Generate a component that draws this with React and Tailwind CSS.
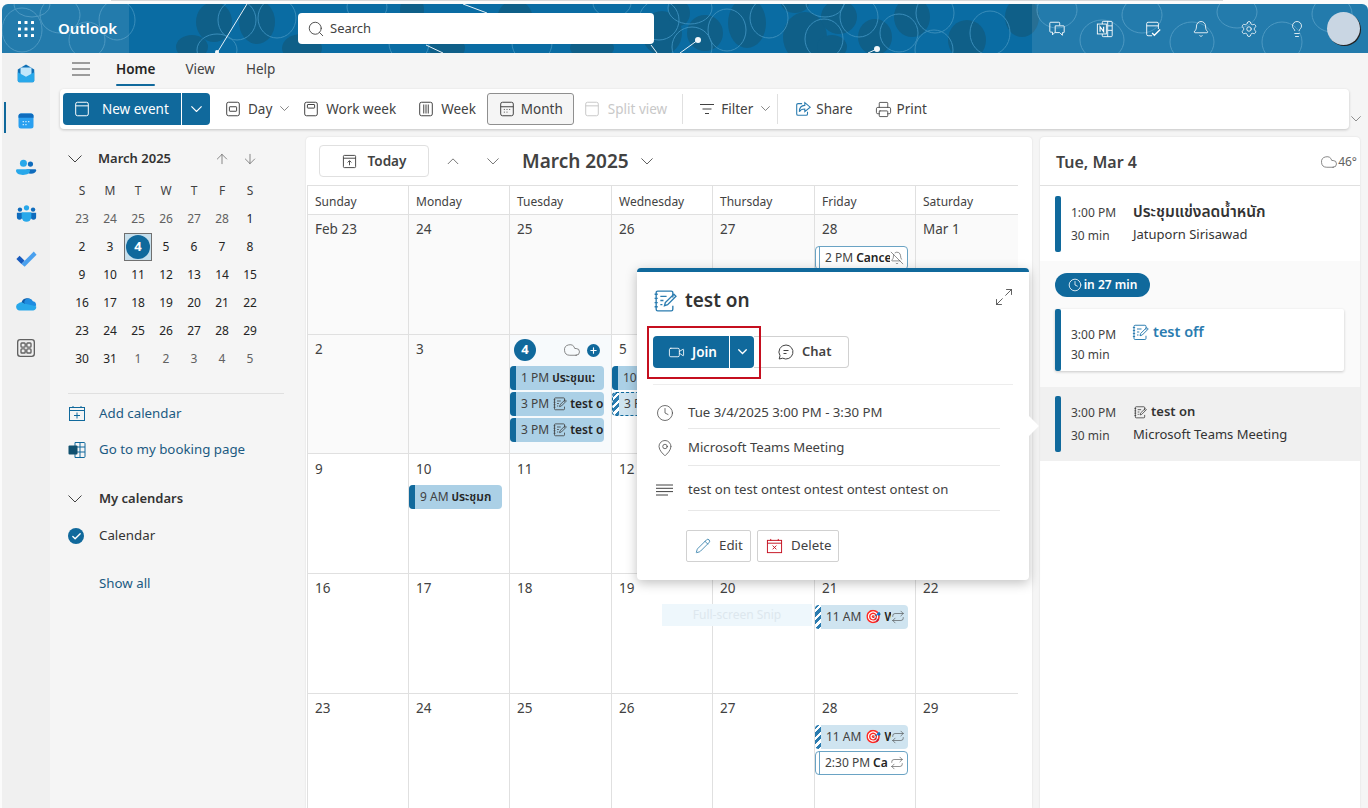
import React from "react";
import {
  Search, Settings, Bell, BellOff, Lightbulb, ArrowUp, ArrowDown,
  Printer, Clock, MapPin, Pencil, Video, Check, Plus, Cloud, Maximize2, Repeat,
} from "lucide-react";

// dark blobs and thin rings of the header theme, measured off the picture
const darkBlobs = [
  [212, 22, 18, 20], [255, 22, 18, 22], [190, 47, 16, 12], [300, 48, 20, 14], [410, 10, 12, 15], [445, 48, 18, 12],
  [513, 20, 18, 20], [590, 48, 22, 12], [660, 33, 20, 22], [677, 13, 11, 13], [703, 33, 18, 18], [745, 23, 19, 25],
  [793, 3, 14, 10], [803, 37, 22, 25], [837, 17, 18, 17], [830, 47, 15, 12], [873, 37, 17, 18], [910, 17, 18, 20],
  [965, 40, 19, 20], [1020, 17, 17, 20],
];
const rings = [
  [235, 20, 19, 20], [275, 18, 19, 20], [215, 50, 20, 16], [365, 7, 20, 15], [407, 43, 20, 20], [530, 43, 20, 20],
  [610, 3, 19, 14], [657, 20, 20, 20], [688, 8, 22, 16], [725, 30, 19, 21], [767, 18, 19, 20], [690, 47, 20, 20],
  [822, 39, 19, 20], [857, 17, 19, 20], [823, 3, 19, 14], [897, 33, 19, 19], [933, 13, 19, 20], [988, 33, 20, 22],
  [932, 50, 19, 20], [1055, 10, 20, 18], [1100, 40, 22, 20], [1140, 15, 20, 18], [1190, 42, 22, 20], [1235, 12, 20, 16],
  [1280, 42, 20, 20], [1330, 14, 20, 18], [20, 30, 20, 22], [58, 15, 20, 18], [85, 40, 18, 18], [30, 5, 18, 12],
  [115, 20, 18, 20],
];

const SkyPattern = () => (
  <svg className="absolute inset-0 h-full w-full" viewBox="0 4 1366 49" preserveAspectRatio="none">
    {darkBlobs.map((b, i) => (
      <ellipse key={i} cx={b[0]} cy={b[1]} rx={b[2]} ry={b[3]} fill="#0f5f88" />
    ))}
    {rings.map((b, i) => (
      <ellipse key={i} cx={b[0]} cy={b[1]} rx={b[2]} ry={b[3]} fill="none" stroke="#3a8dba" strokeWidth="1" />
    ))}
    {[
      [245, 4, 215, 53], [461, 4, 485, 13], [424, 45, 441, 53], [649, 45, 655, 53], [696, 40, 678, 53], [875, 49, 866, 53],
    ].map((l, i) => (
      <line key={i} x1={l[0]} y1={l[1]} x2={l[2]} y2={l[3]} stroke="#e8f2f8" strokeWidth="1" />
    ))}
    <circle cx="215" cy="52" r="2" fill="#f2f7fa" />
    <circle cx="696" cy="40" r="3" fill="#f2f7fa" />
    <circle cx="875" cy="49" r="3" fill="#f2f7fa" />
  </svg>
);

const Chev = ({ className = "", up, w = 14, color = "currentColor" }) => (
  <svg viewBox="0 0 14 8" width={w} height={(w * 8) / 14} className={`shrink-0 ${className}`} fill="none" stroke={color} strokeWidth="1">
    <path d={up ? "M.5 7.500 7 1l6.500 6.500" : "M.5.5 7 7 13.500.5"} />
  </svg>
);

const NoteIcon = ({ className, color = "currentColor" }) => (
  <svg viewBox="0 0 24 24" className={className} fill="none" stroke={color} strokeWidth="1.3">
    <path d="M20 9V4.500a1.500 1.500 0 0 0-1.500-1.500h-13A1.500 1.500 0 0 0 4 4.500v16A1.500 1.500 0 0 0 5.500 22h13a1.500 1.500 0 0 0 1.500-1.500V17" />
    <path d="M2.500 6h3M2.500 10h3M2.500 14h3M2.500 18h3M8 8h6M8 12h3M8 16h2" />
    <path d="M12 17l.8-3L21 6l2 2-8 8z" />
  </svg>
);

const RailIcons = {
  mail: (
    <svg viewBox="0 0 24 24" className="h-[22px] w-[22px]">
      <path d="M12 1.500 21 7v12a2 2 0 0 1-2 2H5a2 2 0 0 1-2-2V7z" fill="#0f6fb5" />
      <path d="M6 5h12v8l-6 3-6-3z" fill="#bfe6fb" />
      <path d="M3 10l9 5 9-5v9a2 2 0 0 1-2 2H5a2 2 0 0 1-2-2z" fill="#28a8ea" />
    </svg>
  ),
  calendar: (
    <svg viewBox="0 0 24 24" className="h-[20px] w-[20px]">
      <rect x="3" y="3" width="18" height="18" rx="3" fill="#2aa0f0" />
      <path d="M3 8V6a3 3 0 0 1 3-3h12a3 3 0 0 1 3 3v2z" fill="#0f6cbd" />
      <path d="M8 12h1.500v1.500H8zM11.200 12h1.500v1.500h-1.500zM14.500 12H16v1.500h-1.500zM8 15.500h1.500V17H8zM11.200 15.500h1.500V17h-1.500z" fill="#d6effd" />
    </svg>
  ),
  people: (
    <svg viewBox="0 0 24 24" className="h-[21px] w-[21px]">
      <circle cx="16.500" cy="8" r="3" fill="#0f6cbd" />
      <path d="M12 14h10a1 1 0 0 1 1 1c0 2.500-2.500 4-6 4s-5-1.500-5-4z" fill="#0f6cbd" />
      <circle cx="8.500" cy="7" r="4" fill="#28a8ea" />
      <path d="M1.500 14h13a1.500 1.500 0 0 1 1.500 1.500c0 3-3 5-8 5s-8-2-8-5A1.500 1.500 0 0 1 1.500 14z" fill="#28a8ea" />
    </svg>
  ),
  group: (
    <svg viewBox="0 0 24 24" className="h-[21px] w-[21px]">
      <circle cx="4.500" cy="7.500" r="2.500" fill="#0f6cbd" />
      <circle cx="19.500" cy="7.500" r="2.500" fill="#0f6cbd" />
      <circle cx="12" cy="5.500" r="3" fill="#28a8ea" />
      <path d="M1 11h6v5a3 3 0 0 1-6 0zM17 11h6v5a3 3 0 0 1-6 0z" fill="#0f6cbd" />
      <path d="M6.500 10.500h11V16a5.500 5.500 0 0 1-11 0z" fill="#28a8ea" />
    </svg>
  ),
  todo: (
    <svg viewBox="0 0 24 24" className="h-[22px] w-[22px]">
      <path d="M1.500 13 5 9.500l5.500 5.500L7 18.500z" fill="#185abd" />
      <path d="M7 18.500 20.500 5l3 3.500-13 13-3.500-3z" fill="#4aa0ee" />
    </svg>
  ),
  cloud: (
    <svg viewBox="0 0 24 24" className="h-[22px] w-[22px]">
      <path d="M7 10.500a6.500 6.500 0 0 1 12-1.500l-8 6-6-2z" fill="#0f5ba7" />
      <path d="M10 10a5 5 0 0 1 9.500-1 4.500 4.500 0 0 1 3.500 5l-9 2z" fill="#1f8ce0" />
      <path d="M5 19a4 4 0 0 1-1-7.800 4 4 0 0 1 6 .3l13 3a3.500 3.500 0 0 1-3 4.500z" fill="#28a8ea" />
    </svg>
  ),
  apps: (
    <svg viewBox="0 0 24 24" className="h-[20px] w-[20px]" fill="none" stroke="#616161" strokeWidth="1.600">
      <rect x="2" y="2" width="20" height="20" rx="3" />
      <rect x="6" y="6" width="5" height="5" rx="1" />
      <rect x="13" y="6" width="5" height="5" rx="1" />
      <rect x="6" y="13" width="5" height="5" rx="1" />
      <rect x="13" y="13" width="5" height="5" rx="1" />
    </svg>
  ),
};

const Rail = () => (
  <div className="flex w-[48px] shrink-0 flex-col items-center bg-[#f0f0f0] pt-[9px]">
    <div className="flex h-[24px] items-center justify-center">{RailIcons.mail}</div>
    <div className="relative mt-[23px] flex h-[24px] w-full items-center justify-center">
      <span className="absolute left-[2px] top-[-7px] h-[31px] w-[2px] bg-[#10699c]" />
      {RailIcons.calendar}
    </div>
    <div className="mt-[22px] flex h-[24px] items-center">{RailIcons.people}</div>
    <div className="mt-[22px] flex h-[24px] items-center">{RailIcons.group}</div>
    <div className="mt-[21px] flex h-[24px] items-center">{RailIcons.todo}</div>
    <div className="mt-[22px] flex h-[24px] items-center">{RailIcons.cloud}</div>
    <div className="mt-[20px] flex h-[24px] items-center">{RailIcons.apps}</div>
  </div>
);

const SmallCal = ({ type }) => {
  const inner = {
    day: <rect x="6" y="7.500" width="8" height="5" rx="0.500" />,
    work: <rect x="6" y="5" width="8" height="4" rx="0.500" />,
    week: <path d="M7.500 5v10M10 5v10M12.500 5v10" />,
    month: <path d="M3 7.500h14M6.500 10.500h1M9.500 10.500h1M12.500 10.500h1M6.500 13.500h1M9.500 13.500h1" />,
    plain: <path d="M3 6.500h14" />,
  }[type];
  return (
    <svg viewBox="0 0 20 20" className="h-[18px] w-[18px] shrink-0" fill="none" stroke="currentColor" strokeWidth="1.100">
      <rect x="3" y="2.500" width="14" height="15" rx="2" />
      {inner}
    </svg>
  );
};

const Toolbar = () => (
  <div className="flex items-center">
    <div className="ml-[10px] flex h-[40px] w-[1289px] items-center rounded-[4px] bg-white pl-[3px] text-[13.500px] text-[#424242] shadow-[0_1px_3px_rgba(0,0,0,0.2)]">
      <div className="flex h-[32px] w-[147px] items-center rounded-[4px] bg-[#10699c] text-white">
        <div className="flex w-[118px] items-center pl-[10px]">
          <SmallCal type="plain" />
          <span className="ml-[11px]">New event</span>
        </div>
        <div className="flex h-full flex-1 items-center justify-center border-l border-white">
          <Chev w={11} className="[stroke-width:1.500]" />
        </div>
      </div>
      <div className="ml-[14px] flex items-center">
        <SmallCal type="day" />
        <span className="ml-[6px]">Day</span>
        <Chev w={9} className="ml-[8px]" />
      </div>
      <div className="ml-[13px] flex items-center">
        <SmallCal type="work" />
        <span className="ml-[6px]">Work week</span>
      </div>
      <div className="ml-[21px] flex items-center">
        <SmallCal type="week" />
        <span className="ml-[6px]">Week</span>
      </div>
      <div className="ml-[11px] flex h-[32px] w-[87px] items-center rounded-[3px] border border-[#8f8f8f] bg-[#f5f5f5] pl-[10px]">
        <SmallCal type="month" />
        <span className="ml-[5px]">Month</span>
      </div>
      <div className="ml-[9px] flex items-center text-[#c8c8c8]">
        <SmallCal type="plain" />
        <span className="ml-[7px]">Split view</span>
      </div>
      <span className="ml-[15px] h-[30px] w-px bg-[#e0e0e0]" />
      <div className="ml-[16px] flex items-center">
        <svg viewBox="0 0 16 16" className="h-[16px] w-[16px]" fill="none" stroke="currentColor">
          <path d="M1 3.500h14M3.500 8h9M6 12.500h4" />
        </svg>
        <span className="ml-[6px]">Filter</span>
        <Chev w={9} className="ml-[8px]" />
      </div>
      <span className="ml-[7px] h-[30px] w-px bg-[#e0e0e0]" />
      <div className="ml-[16px] flex items-center">
        <svg viewBox="0 0 20 20" className="h-[18px] w-[18px]" fill="none" stroke="#2b7cb0" strokeWidth="1.200">
          <path d="M9 4H4.500A1.500 1.500 0 0 0 3 5.500v10A1.500 1.500 0 0 0 4.500 17h9a1.500 1.500 0 0 0 1.500-1.500V13" />
          <path d="M12 3l6 5-6 5v-3c-3 0-5 1-6 3 0-4 2-7 6-7z" />
        </svg>
        <span className="ml-[4px]">Share</span>
      </div>
      <div className="ml-[22px] flex items-center">
        <Printer size={17} strokeWidth={1.200} />
        <span className="ml-[5px]">Print</span>
      </div>
    </div>
    <Chev w={10} className="ml-[2px] mt-[20px] text-[#616161]" />
  </div>
);

const weeks = [
  ["23", "24", "25", "26", "27", "28", "1"],
  ["2", "3", "4", "5", "6", "7", "8"],
  ["9", "10", "11", "12", "13", "14", "15"],
  ["16", "17", "18", "19", "20", "21", "22"],
  ["23", "24", "25", "26", "27", "28", "29"],
  ["30", "31", "1", "2", "3", "4", "5"],
];

const Sidebar = () => (
  <div className="w-[256px] shrink-0 pl-[18px] pt-[9px] text-[13.300px] text-[#242424]">
    <div className="flex h-[24px] items-center pt-[2px]">
      <Chev color="#424242" />
      <span className="ml-[16px] text-[13px] font-semibold text-[#333]">March 2025</span>
      <ArrowUp size={16} strokeWidth={1.100} className="ml-[43px] text-[#616161]" />
      <ArrowDown size={16} strokeWidth={1.100} className="ml-[12px] text-[#616161]" />
    </div>
    <div className="mt-[7px] grid w-[196px] grid-cols-7 text-center">
      {["S", "M", "T", "W", "T", "F", "S"].map((d, i) => (
        <span key={i} className="flex h-[28px] items-center justify-center text-[12px] text-[#424242]">{d}</span>
      ))}
      {weeks.map((w, wi) =>
        w.map((d, i) => {
          const muted = (wi === 0 && i < 6) || (wi === 5 && i > 1);
          if (wi === 1 && i === 2) {
            return (
              <span key={d} className="flex h-[28px] items-center justify-center border border-[#707070] bg-[#c7dfec]">
                <span className="flex h-[24px] w-[24px] items-center justify-center rounded-full bg-[#10699c] text-[13px] font-bold text-white">4</span>
              </span>
            );
          }
          return (
            <span key={wi + "-" + i} className={`flex h-[28px] items-center justify-center text-[12px] ${muted ? "text-[#616161]" : "text-[#242424]"}`}>
              {d}
            </span>
          );
        })
      )}
    </div>
    <div className="mt-[20px] h-px w-[216px] bg-[#e0e0e0]" />
    <div className="mt-[10px] flex h-[20px] items-center text-[#1b5a82]">
      <svg viewBox="0 0 18 18" className="h-[18px] w-[18px]" fill="none" stroke="#10699c">
        <rect x="1.500" y="2.500" width="15" height="13" />
        <path d="M1.500 5.500h15M5 1v2M13 1v2M9 7.500v6M6 10.500h6" />
      </svg>
      <span className="ml-[13px]">Add calendar</span>
    </div>
    <div className="mt-[16px] flex h-[20px] items-center text-[#1b5a82]">
      <svg viewBox="0 0 18 18" className="h-[18px] w-[18px]">
        <path d="M7 1.500h9a1 1 0 0 1 1 1v13a1 1 0 0 1-1 1H7z" fill="none" stroke="#10699c" />
        <path d="M8 6h9M8 11h9M12 2v14" stroke="#10699c" />
        <rect x="0.500" y="4.500" width="9" height="9" rx="1" fill="#10506f" />
      </svg>
      <span className="ml-[13px]">Go to my booking page</span>
    </div>
    <div className="mt-[29px] flex h-[20px] items-center font-semibold text-[#333]">
      <Chev color="#424242" />
      <span className="ml-[17px] text-[13px]">My calendars</span>
    </div>
    <div className="mt-[17px] flex h-[20px] items-center text-[#333]">
      <span className="flex h-[16px] w-[16px] items-center justify-center rounded-full bg-[#10699c] text-white">
        <Check size={11} strokeWidth={3} />
      </span>
      <span className="ml-[15px]">Calendar</span>
    </div>
    <div className="ml-[31px] mt-[28px] text-[#1b5a82]">Show all</div>
  </div>
);

const Hatch = () => (
  <span className="h-full w-[6px] shrink-0 bg-[repeating-linear-gradient(135deg,#2b7cb0_0,#2b7cb0_3px,#ffffff_3px,#ffffff_5.500px)]" />
);

const Event = ({ time, title, kind = "solid", note, emoji, trail, tone = "mid" }) => {
  const bg = kind === "outline" ? "bg-white border border-[#6aa3c4]" : tone === "light" ? "bg-[#cfe4f0]" : "bg-[#abd0e6]";
  const dashed = kind === "dashed" ? "border border-dashed border-[#10699c] bg-[#cfe4f0]" : "";
  return (
    <div className={`mb-[2px] mr-[7px] flex h-[24px] items-center overflow-hidden whitespace-nowrap rounded-[4px] text-[12px] text-[#424242] ${dashed || bg}`}>
      {kind === "hatch" || kind === "dashed" ? <Hatch /> : kind === "outline" ? <span className="h-full w-[4px] shrink-0 border-r border-[#6aa3c4]" /> : <span className="h-full w-[6px] shrink-0 bg-[#10699c]" />}
      <span className="ml-[5px] shrink-0">{time}</span>
      {note && <NoteIcon className="ml-[3px] h-[15px] w-[15px] shrink-0" />}
      {emoji && <span className="ml-[4px] shrink-0 text-[13px]">🎯</span>}
      <span className="ml-[3px] min-w-0 flex-1 overflow-hidden font-semibold text-[#242424]">{title}</span>
      {trail}
    </div>
  );
};

const Cell = ({ label, past, today, children, last }) => (
  <div className={`h-full border-t border-[#e0e0e0] ${last ? "" : "border-r"} ${past ? "bg-[#fafafa]" : today ? "bg-[#f7fafc]" : "bg-white"}`}>
    {today ? (
      <div className="flex h-[31px] items-center pl-[4px] pr-[3px]">
        <span className="flex h-[22px] w-[22px] items-center justify-center rounded-full bg-[#10699c] text-[13px] font-bold text-white">{label}</span>
        <Cloud size={18} strokeWidth={1} className="ml-auto text-[#616161]" />
        <span className="ml-[6px] mr-[8px] flex h-[13px] w-[13px] items-center justify-center rounded-full bg-[#10699c] text-white">
          <Plus size={9} strokeWidth={3} />
        </span>
      </div>
    ) : (
      <div className="flex h-[31px] items-center pb-[2px] pl-[7px] text-[13.500px] text-[#424242]">{label}</div>
    )}
    {children}
  </div>
);

const rep = <Repeat size={14} strokeWidth={1} className="mr-[3px] shrink-0 text-[#424242]" />;

const grid = [
  [
    { label: "Feb 23" }, { label: "24" }, { label: "25" }, { label: "26" }, { label: "27" },
    { label: "28", events: <Event kind="outline" time="2 PM" title="Cance" trail={<BellOff size={14} strokeWidth={1} className="mr-[3px] shrink-0 text-[#424242]" />} /> },
    { label: "Mar 1" },
  ],
  [
    { label: "2" }, { label: "3" },
    {
      label: "4", today: true,
      events: (
        <>
          <Event time="1 PM" title="ประชุมแ:" />
          <Event time="3 PM" title="test o" note />
          <Event time="3 PM" title="test o" note />
        </>
      ),
    },
    {
      label: "5",
      events: (
        <>
          <Event time="10" title="" />
          <Event kind="dashed" time="3 P" title="" />
        </>
      ),
    },
    { label: "6" }, { label: "7" }, { label: "8" },
  ],
  [
    { label: "9" },
    { label: "10", events: <Event time="9 AM" title="ประชุมก" /> },
    { label: "11" }, { label: "12" }, { label: "13" }, { label: "14" }, { label: "15" },
  ],
  [
    { label: "16" }, { label: "17" }, { label: "18" }, { label: "19" }, { label: "20" },
    { label: "21", events: <Event kind="hatch" tone="light" time="11 AM" emoji title="W" trail={rep} /> },
    { label: "22" },
  ],
  [
    { label: "23" }, { label: "24" }, { label: "25" }, { label: "26" }, { label: "27" },
    {
      label: "28",
      events: (
        <>
          <Event kind="hatch" tone="light" time="11 AM" emoji title="W" trail={rep} />
          <Event kind="outline" time="2:30 PM" title="Ca" trail={rep} />
        </>
      ),
    },
    { label: "29" },
  ],
];

const CalendarPanel = () => (
  <div className="w-[726px] shrink-0 rounded-t-[4px] bg-white pl-px shadow-[0_0_2px_rgba(0,0,0,0.12)]">
    <div className="flex h-[48px] items-center pl-[12px]">
      <div className="flex h-[32px] w-[110px] items-center justify-center rounded-[4px] border border-[#e0e0e0] text-[13.500px] font-semibold text-[#424242]">
        <svg viewBox="0 0 16 16" className="mr-[11px] h-[15px] w-[15px]" fill="none" stroke="currentColor">
          <rect x="1.500" y="1.500" width="13" height="13" rx="1" />
          <path d="M1.500 4.500h13M8 12V7.500M6 9l2-2 2 2" />
        </svg>
        Today
      </div>
      <Chev up w={12} className="ml-[18px] text-[#616161]" />
      <Chev w={12} className="ml-[28px] text-[#616161]" />
      <span className="ml-[23px] text-[19px] font-semibold text-[#424242]">March 2025</span>
      <Chev w={12} className="ml-[12px] text-[#424242]" />
    </div>
    <div className="grid w-[711px] grid-cols-[101px_101px_102px_101px_102px_101px_102px] border-l border-t border-[#e0e0e0]">
      {["Sunday", "Monday", "Tuesday", "Wednesday", "Thursday", "Friday", "Saturday"].map((d, i) => (
        <div key={d} className={`flex h-[28px] items-center pl-[7px] pt-[3px] text-[12px] text-[#424242] ${i < 6 ? "border-r border-[#e0e0e0]" : ""}`}>{d}</div>
      ))}
    </div>
    <div className="grid w-[711px] auto-rows-[119.700px] grid-cols-[101px_101px_102px_101px_102px_101px_102px] border-l border-[#e0e0e0]">
      {grid.map((row, ri) =>
        row.map((c, i) => (
          <Cell key={ri + "-" + i} label={c.label} today={c.today} past={ri === 0 || (ri === 1 && i < 2)} last={i === 6}>
            {c.events}
          </Cell>
        ))
      )}
    </div>
  </div>
);

const AgendaItem = ({ time, title, sub, note, noteClass, titleClass = "font-semibold text-[#333]", barH = "h-[56px]", timeClass = "pt-[5px] leading-[23px]" }) => (
  <div className="flex">
    <span className={`${barH} w-[6px] shrink-0 rounded-[2px] bg-[#10699c]`} />
    <div className={`ml-[10px] w-[62px] shrink-0 text-[12px] text-[#424242] ${timeClass}`}>
      <div>{time}</div>
      <div>30 min</div>
    </div>
    <div className="pt-[4px] text-[13px] leading-[23px] text-[#333]">
      <div className={`flex items-center ${titleClass}`}>
        {note && <NoteIcon className={noteClass} />}
        {title}
      </div>
      {sub && <div>{sub}</div>}
    </div>
  </div>
);

const Agenda = () => (
  <div className="ml-[8px] w-[320px] shrink-0 rounded-t-[4px] bg-white shadow-[0_0_2px_rgba(0,0,0,0.12)]">
    <div className="flex h-[49px] items-center border-b border-[#e0e0e0] pl-[16px] pr-[3px] pt-[2px]">
      <span className="text-[16px] font-semibold text-[#424242]">Tue, Mar 4</span>
      <Cloud size={18} strokeWidth={1} className="ml-auto text-[#616161]" />
      <span className="text-[12px] text-[#616161]">46°</span>
    </div>
    <div className="h-[75px] pl-[15px] pt-[10px]">
      <AgendaItem time="1:00 PM" title="ประชุมแข่งลดน้ำหนัก" titleClass="text-[15.500px] font-semibold text-[#333]" sub="Jatuporn Sirisawad" />
    </div>
    <div className="h-[126px] bg-[#fafafa] pl-[15px] pt-[12px]">
      <div className="flex h-[24px] w-[95px] items-center justify-center rounded-full bg-[#10699c] text-[12px] font-semibold text-white">
        <Clock size={14} strokeWidth={1.400} className="mr-[2px]" />
        in 27 min
      </div>
      <div className="mt-[12px] h-[62px] w-[289px] rounded-[2px] bg-white shadow-[0_1px_3px_rgba(0,0,0,0.2)]">
        <AgendaItem
          time="3:00 PM"
          title="test off"
          note
          noteClass="-ml-[2px] mr-[4px] h-[18px] w-[18px] text-[#2b7cb0]"
          titleClass="pt-[7px] text-[14.500px] font-semibold text-[#2b7cb0]"
          barH="h-[62px]"
          timeClass="pt-[16px] leading-[20px]"
        />
      </div>
    </div>
    <div className="h-[74px] bg-[#f0f0f0] pl-[15px] pt-[9px]">
      <AgendaItem time="3:00 PM" title="test on" sub="Microsoft Teams Meeting" note noteClass="mr-[4px] h-[14px] w-[14px]" />
    </div>
  </div>
);

const InfoRow = ({ icon, children, h, pad = "" }) => (
  <div className="flex">
    <div className="flex w-[51px] shrink-0 justify-center pl-[4px] text-[#424242]">
      <div className={`flex h-full items-center ${pad}`}>{icon}</div>
    </div>
    <div className={`flex flex-1 items-center border-b border-[#e8e8e8] text-[13.200px] text-[#424242] ${pad} ${h}`}>
      {children}
    </div>
  </div>
);

const Popover = () => (
  <div className="absolute left-[637px] top-[268px] z-10 h-[312px] w-[392px] rounded-[4px] border-t-[4px] border-[#10699c] bg-white shadow-[0_3px_12px_rgba(0,0,0,0.25)]">
    <span className="absolute right-[-7px] top-[147px] h-[14px] w-[14px] rotate-45 bg-white" />
    <div className="flex h-[56px] items-center pl-[15px] pr-[15px]">
      <NoteIcon className="h-[25px] w-[25px] text-[#2b7cb0]" />
      <span className="ml-[8px] text-[19px] font-semibold text-[#333]">test on</span>
      <Maximize2 size={20} strokeWidth={1} className="mb-[6px] ml-auto text-[#424242]" />
    </div>
    <div className="relative ml-[16px] mt-[8px] flex h-[32px] items-center">
      <span className="pointer-events-none absolute left-[-6px] top-[-10px] z-[2] h-[53px] w-[114px] border-2 border-[#c50f1f]" />
      <div className="z-[1] flex h-[32px] w-[101px] items-center rounded-[4px] bg-[#10699c] text-[13.500px] font-semibold text-white">
        <div className="flex w-[76px] items-center pl-[15px]">
          <Video size={17} strokeWidth={1.200} />
          <span className="ml-[7px]">Join</span>
        </div>
        <div className="flex h-full flex-1 items-center justify-center border-l border-white">
          <Chev w={9} className="[stroke-width:2]" />
        </div>
      </div>
      <div className="flex h-[32px] w-[95px] items-center rounded-r-[4px] border border-l-0 border-[#d1d1d1] pl-[24px] text-[13px] font-semibold text-[#424242]">
        <svg viewBox="0 0 16 16" className="h-[16px] w-[16px] shrink-0" fill="none" stroke="currentColor">
          <path d="M8 1a7 7 0 1 1-3.300 13.200L1.200 15l.8-3.300A7 7 0 0 1 8 1z" />
          <path d="M5.500 6.500h5M5.500 9.500h3" />
        </svg>
        <span className="ml-[8px]">Chat</span>
      </div>
    </div>
    <div className="mx-[16px] mt-[16px] h-px bg-[#ededed]" />
    <div className="pr-[29px]">
      <InfoRow h="h-[44px]" pad="pt-[12px]" icon={<Clock size={18} strokeWidth={1} />}>Tue 3/4/2025 3:00 PM - 3:30 PM</InfoRow>
      <InfoRow h="h-[37px]" pad="pt-[1px]" icon={<MapPin size={18} strokeWidth={1} />}>Microsoft Teams Meeting</InfoRow>
      <InfoRow
        h="h-[45px]"
        pad="pt-[3px]"
        icon={
          <svg viewBox="0 0 17 12" className="h-[12px] w-[17px]" fill="none" stroke="currentColor">
            <path d="M0 1h17M0 4.300h17M0 7.600h17M0 11h12" />
          </svg>
        }
      >
        test on test ontest ontest ontest ontest on
      </InfoRow>
    </div>
    <div className="ml-[49px] mt-[19px] flex">
      <div className="flex h-[32px] w-[65px] items-center rounded-[2px] border border-[#d1d1d1] pl-[8px] text-[13.300px] text-[#424242]">
        <Pencil size={16} strokeWidth={1.100} className="text-[#10699c]" />
        <span className="ml-[8px]">Edit</span>
      </div>
      <div className="ml-[6px] flex h-[32px] w-[82px] items-center rounded-[2px] border border-[#d1d1d1] pl-[8px] text-[13.300px] text-[#424242]">
        <svg viewBox="0 0 18 18" className="h-[17px] w-[17px]" fill="none" stroke="#c50f1f">
          <rect x="1.500" y="2.500" width="15" height="13" />
          <path d="M1.500 5.500h15M5 1v2M13 1v2M7 8l4 4M11 8l-4 4" />
        </svg>
        <span className="ml-[8px]">Delete</span>
      </div>
    </div>
  </div>
);

const HeaderIcons = () => (
  <div className="flex h-full w-[336px] items-center bg-white/10 pl-[16px]">
    <div className="flex w-[279px] items-center text-white">
      <div className="flex w-[48px]">
        <svg viewBox="0 0 20 20" className="h-[18px] w-[18px]" fill="none" stroke="currentColor">
          <path d="M13 6V3.500A1 1 0 0 0 12 2.500H3A1 1 0 0 0 2 3.500v9a1 1 0 0 0 1 1h2v3l3-3" />
          <path d="M8 6.500h9.500a.5.5 0 0 1 .5.5v6.500a.5.5 0 0 1-.5.5H16v3l-3-3H8z" />
        </svg>
      </div>
      <div className="flex w-[48px]">
        <svg viewBox="0 0 20 20" className="h-[18px] w-[18px]" fill="none" stroke="currentColor">
          <rect x="7" y="1.500" width="11" height="17" rx="1" />
          <path d="M13 1.500v17M13 6.500h5M13 11.500h5" />
          <rect x="1.500" y="4.500" width="10" height="11" fill="#2176a3" />
          <path d="M4.500 13V7.500l4 5.500V7.500" strokeWidth="1.300" />
        </svg>
      </div>
      <div className="flex w-[48px]">
        <svg viewBox="0 0 20 20" className="h-[18px] w-[18px]" fill="none" stroke="currentColor">
          <path d="M9 17.500H4.500A1.500 1.500 0 0 1 3 16V4a1.500 1.500 0 0 1 1.500-1.500h10A1.500 1.500 0 0 1 16 4v6M3 6.500h13" />
          <path d="M9 14.500l2.500 2.500L18 10.500" strokeWidth="1.500" />
        </svg>
      </div>
      <div className="flex w-[48px]"><Bell size={18} strokeWidth={1.100} /></div>
      <div className="flex w-[48px]"><Settings size={18} strokeWidth={1.100} /></div>
      <div className="flex w-[39px]"><Lightbulb size={18} strokeWidth={1.100} /></div>
    </div>
    <span className="h-[33px] w-[33px] rounded-full bg-[#c9d6e3] shadow-[1px_1px_0_#222]" />
  </div>
);

const Header = () => (
  <div className="relative flex h-[49px] items-center overflow-hidden rounded-t-[6px] bg-[#0a6ca3]">
    <SkyPattern />
    <div className="relative flex h-full w-[127px] items-center bg-white/10 pl-[15px] text-white">
      <svg viewBox="0 0 18 18" className="h-[18px] w-[18px] shrink-0" fill="currentColor">
        {[1, 7.500, 14].map((y) => [1, 7.500, 14].map((x) => <rect key={x + "-" + y} x={x} y={y} width="3" height="3" rx="0.500" />))}
      </svg>
      <span className="ml-[23px] text-[15px] font-semibold">Outlook</span>
    </div>
    <div className="relative ml-[169px] flex h-[31px] w-[356px] items-center rounded-[4px] bg-white pl-[9px] text-[13px] text-[#424242]">
      <Search size={18} strokeWidth={1.200} />
      <span className="ml-[5px]">Search</span>
    </div>
    <div className="relative ml-auto h-full"><HeaderIcons /></div>
  </div>
);

export default function App() {
  return (
    <div className="relative h-[808px] w-[1368px] overflow-hidden bg-[#fbfbfb] pl-[2px] pt-[4px] [font-family:'Noto_Sans','Noto_Sans_Thai',sans-serif]">
      <div className="absolute left-[111px] top-0 h-[1px] w-[1112px] bg-[#d8d8d8]" />
      <Header />
      <div className="flex h-[755px]">
        <Rail />
        <div className="min-w-0 flex-1 bg-[#f5f5f5]">
          <div className="flex h-[36px] items-center pb-[4px] pl-[22px] text-[13.500px] text-[#424242]">
            <svg viewBox="0 0 18 14" className="h-[14px] w-[18px]" fill="none" stroke="#424242">
              <path d="M0 1h18M0 7h18M0 13h18" />
            </svg>
            <div className="relative ml-[26px] font-semibold text-[#242424]">
              Home
              <span className="absolute bottom-[-7px] left-0 h-[2px] w-full rounded-full bg-[#10699c]" />
            </div>
            <span className="ml-[30px]">View</span>
            <span className="ml-[31px]">Help</span>
          </div>
          <Toolbar />
          <div className="mt-[8px] flex h-[671px]">
            <Sidebar />
            <CalendarPanel />
            <Agenda />
          </div>
        </div>
      </div>
      <div className="absolute left-[662px] top-[604px] flex h-[22px] w-[150px] items-center justify-center bg-[#eef7fc] text-[12px] text-[#dde7ee]">
        Full-screen Snip
      </div>
      <Popover />
    </div>
  );
}
